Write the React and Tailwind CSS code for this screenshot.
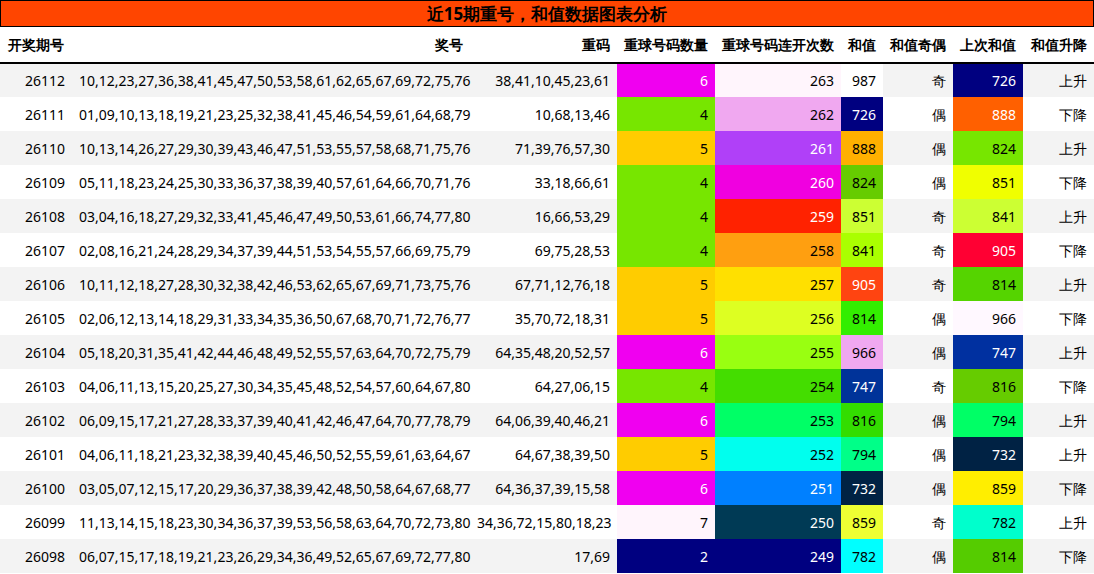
const W = 'text-white';
const B = 'text-black';

const rows = [
  ['26112', '10,12,23,27,36,38,41,45,47,50,53,58,61,62,65,67,69,72,75,76', '38,41,10,45,23,61', ['6', '#f000f0', W], ['263', '#fff5fc', B], ['987', '#ffffff', B], '奇', ['726', '#000080', W], '上升'],
  ['26111', '01,09,10,13,18,19,21,23,25,32,38,41,45,46,54,59,61,64,68,79', '10,68,13,46', ['4', '#77e600', B], ['262', '#f0a8f0', B], ['726', '#000080', W], '偶', ['888', '#ff6000', W], '下降'],
  ['26110', '10,13,14,26,27,29,30,39,43,46,47,51,53,55,57,58,68,71,75,76', '71,39,76,57,30', ['5', '#ffcc00', B], ['261', '#b040f8', W], ['888', '#ffb000', B], '偶', ['824', '#77e600', B], '上升'],
  ['26109', '05,11,18,23,24,25,30,33,36,37,38,39,40,57,61,64,66,70,71,76', '33,18,66,61', ['4', '#77e600', B], ['260', '#f000e0', W], ['824', '#66cc00', B], '偶', ['851', '#f0ff00', B], '下降'],
  ['26108', '03,04,16,18,27,29,32,33,41,45,46,47,49,50,53,61,66,74,77,80', '16,66,53,29', ['4', '#77e600', B], ['259', '#ff2200', W], ['851', '#ccff33', B], '奇', ['841', '#ccff33', B], '上升'],
  ['26107', '02,08,16,21,24,28,29,34,37,39,44,51,53,54,55,57,66,69,75,79', '69,75,28,53', ['4', '#77e600', B], ['258', '#ff9f10', B], ['841', '#aaff00', B], '奇', ['905', '#ff0033', W], '下降'],
  ['26106', '10,11,12,18,27,28,30,32,38,42,46,53,62,65,67,69,71,73,75,76', '67,71,12,76,18', ['5', '#ffcc00', B], ['257', '#ffe000', B], ['905', '#ff4411', W], '奇', ['814', '#55d400', B], '上升'],
  ['26105', '02,06,12,13,14,18,29,31,33,34,35,36,50,67,68,70,71,72,76,77', '35,70,72,18,31', ['5', '#ffcc00', B], ['256', '#ddff22', B], ['814', '#33ee00', B], '偶', ['966', '#fff8ff', B], '下降'],
  ['26104', '05,18,20,31,35,41,42,44,46,48,49,52,55,57,63,64,70,72,75,79', '64,35,48,20,52,57', ['6', '#f000f0', W], ['255', '#99ff11', B], ['966', '#f0a8f0', B], '偶', ['747', '#0030a0', W], '上升'],
  ['26103', '04,06,11,13,15,20,25,27,30,34,35,45,48,52,54,57,60,64,67,80', '64,27,06,15', ['4', '#77e600', B], ['254', '#44dd00', B], ['747', '#003399', W], '奇', ['816', '#66cc00', B], '下降'],
  ['26102', '06,09,15,17,21,27,28,33,37,39,40,41,42,46,47,64,70,77,78,79', '64,06,39,40,46,21', ['6', '#f000f0', W], ['253', '#00ff66', B], ['816', '#33dd00', B], '偶', ['794', '#00ff66', B], '上升'],
  ['26101', '04,06,11,18,21,23,32,38,39,40,45,46,50,52,55,59,61,63,64,67', '64,67,38,39,50', ['5', '#ffcc00', B], ['252', '#00ffee', B], ['794', '#00ff88', B], '偶', ['732', '#002244', W], '上升'],
  ['26100', '03,05,07,12,15,17,20,29,36,37,38,39,42,48,50,58,64,67,68,77', '64,36,37,39,15,58', ['6', '#f000f0', W], ['251', '#0080ff', W], ['732', '#002244', W], '偶', ['859', '#ffee00', B], '下降'],
  ['26099', '11,13,14,15,18,23,30,34,36,37,39,53,56,58,63,64,70,72,73,80', '34,36,72,15,80,18,23', ['7', '#fff5fc', B], ['250', '#003a55', W], ['859', '#eeff33', B], '奇', ['782', '#00ffcc', B], '上升'],
  ['26098', '06,07,15,17,18,19,21,23,26,29,34,36,49,52,65,67,69,72,77,80', '17,69', ['2', '#000080', W], ['249', '#000080', W], ['782', '#00ffff', B], '偶', ['814', '#55cc00', B], '下降'],
];

const heads = [
  ['开奖期号', 'w-[72px] text-left pl-2'],
  ['奖号', 'w-[398px]'],
  ['重码', 'w-[147px]'],
  ['重球号码数量', 'w-[98px]'],
  ['重球号码连开次数', 'w-[126px]'],
  ['和值', 'w-[42px]'],
  ['和值奇偶', 'w-[70px]'],
  ['上次和值', 'w-[70px]'],
  ['和值升降', 'w-[71px]'],
];

const Colored = ({ cell }) => (
  <td className={`px-[7px] ${cell[2]}`} style={{ backgroundColor: cell[1] }}>{cell[0]}</td>
);

export default function App() {
  return (
    <div className="w-[1094px] h-[574px] overflow-hidden bg-white font-['Liberation_Sans','Noto_Sans_CJK_SC',sans-serif] text-[14px] text-black">
      <div className="h-[27px] bg-[#ff4500] border border-black flex items-center justify-center font-['Liberation_Serif','Noto_Serif_CJK_SC','Noto_Sans_CJK_SC',serif] font-bold text-[17px]">
        近15期重号，和值数据图表分析
      </div>
      <table className="w-[1094px] border-collapse table-fixed text-right">
        <thead>
          <tr className="h-[36px] border-b-2 border-black">
            {heads.map(([h, c]) => (
              <th key={h} className={`font-bold px-[7px] whitespace-nowrap ${c}`}>{h}</th>
            ))}
          </tr>
        </thead>
        <tbody>
          {rows.map((r, i) => (
            <tr key={r[0]} className={`h-[34px] ${i % 2 === 0 ? 'bg-[#f3f3f3]' : 'bg-white'}`}>
              <td className="px-[7px]">{r[0]}</td>
              <td className="px-[7px] whitespace-nowrap">{r[1]}</td>
              <td className="px-[7px] whitespace-nowrap">{r[2]}</td>
              <Colored cell={r[3]} />
              <Colored cell={r[4]} />
              <Colored cell={r[5]} />
              <td className="px-[7px]">{r[6]}</td>
              <Colored cell={r[7]} />
              <td className="px-[7px]">{r[8]}</td>
            </tr>
          ))}
        </tbody>
      </table>
    </div>
  );
}
